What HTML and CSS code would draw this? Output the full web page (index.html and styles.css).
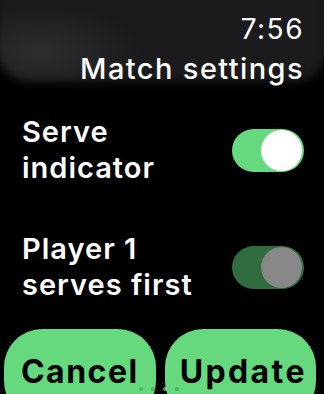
FILE: index.html
```html
<!DOCTYPE html>
<html>
<head>
<meta charset="utf-8">
<link rel="stylesheet" href="styles.css">
</head>
<body>
<div class="screen">
  <header class="header">
    <div class="time">7:56</div>
    <div class="title">Match settings</div>
  </header>
  <div class="rows">
    <div class="row">
      <div class="label">Serve<br>indicator</div>
      <div class="toggle on"><div class="knob"></div></div>
    </div>
    <div class="row">
      <div class="label">Player 1<br>serves first</div>
      <div class="toggle dim"><div class="knob"></div></div>
    </div>
  </div>
  <div class="buttons">
    <div class="btn">Cancel</div>
    <div class="btn btn-update">Update</div>
  </div>
  <div class="dots"><span></span><span></span><span class="cur"></span><span></span></div>
</div>
</body>
</html>
```
FILE: styles.css
```css
html, body {
  margin: 0;
  padding: 0;
  background: #000;
}
.screen {
  width: 324px;
  height: 394px;
  overflow: hidden;
  position: relative;
  font-family: Inter, "Noto Sans", sans-serif;
  color: #fff;
  background: #000;
}
.header {
  position: relative;
  z-index: 0;
  height: 87px;
  box-sizing: border-box;
  padding: 9px 21px 0 0;
  text-align: right;
}
.header::before {
  content: "";
  position: absolute;
  z-index: -1;
  left: -4px;
  right: -4px;
  top: -20px;
  bottom: 5px;
  border-radius: 0 0 34px 34px;
  background:
    radial-gradient(ellipse 100px 45px at 44px 72px, #2e2e31 0%, rgba(46,46,49,0) 100%),
    #1b1b1d;
  filter: blur(5px);
}
.time {
  font-size: 28px;
  line-height: 40px;
  font-weight: 400;
  letter-spacing: 1.5px;
  margin-right: -1px;
}
.title {
  font-size: 29px;
  line-height: 40px;
  font-weight: 500;
  letter-spacing: 1.4px;
  margin-right: -1px;
}
.rows {
  padding: 27px 20px 0 22px;
  display: flex;
  flex-direction: column;
  gap: 45px;
}
.row {
  display: flex;
  align-items: center;
  justify-content: space-between;
}
.label {
  font-size: 29px;
  line-height: 36px;
  font-weight: 600;
  letter-spacing: 1px;
}
.toggle {
  width: 72px;
  height: 43px;
  border-radius: 22px;
  box-sizing: border-box;
  padding: 1px 2px 1px 0;
  display: flex;
  justify-content: flex-end;
}
.toggle.on { background: #66d97e; }
.toggle.dim { background: #2f6c3e; }
.knob {
  width: 41px;
  height: 41px;
  border-radius: 50%;
}
.toggle.on .knob { background: #fff; }
.toggle.dim .knob { background: #888888; }
.buttons {
  margin-top: 26px;
  padding: 0 8px 0 4px;
  display: grid;
  grid-template-columns: 1fr 1fr;
  gap: 9px;
}
.btn {
  height: 90px;
  box-sizing: border-box;
  padding-top: 23px;
  background: #66d97e;
  border-radius: 38px;
  color: #000;
  text-align: center;
  font-size: 32px;
  line-height: 40px;
  font-weight: 700;
  letter-spacing: 1.5px;
  white-space: nowrap;
}
.btn-update {
  letter-spacing: 2.4px;
  padding-left: 6px;
}
.dots {
  position: absolute;
  left: 139px;
  top: 387px;
  display: flex;
  gap: 8px;
}
.dots span {
  width: 4px;
  height: 4px;
  border-radius: 50%;
  background: rgba(60,130,75,0.5);
}
.dots span.cur { background: rgba(220,255,225,0.55); }
```
